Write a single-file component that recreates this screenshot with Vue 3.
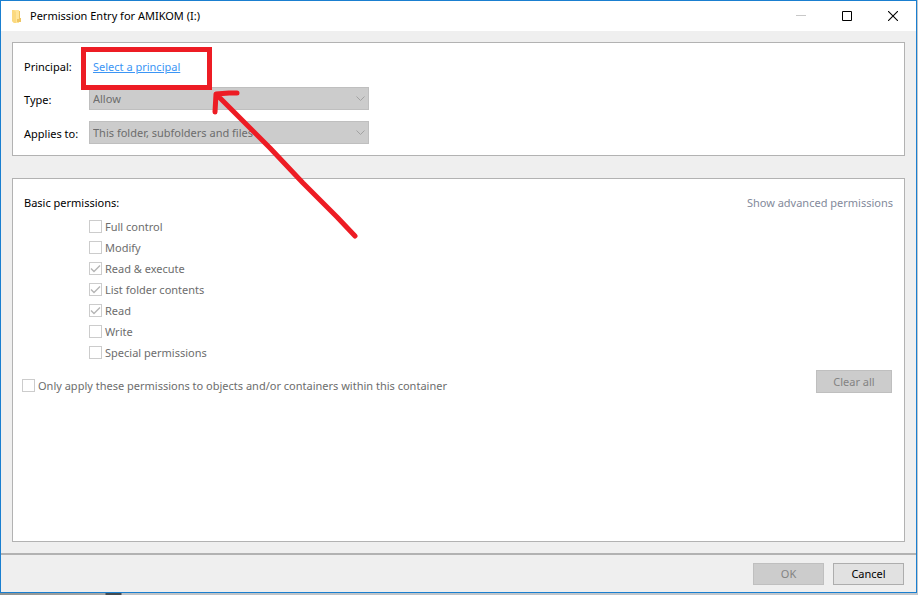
<script setup>
import { ref } from 'vue'

const permissions = ref([
  { id: 'full', label: 'Full control', checked: false },
  { id: 'modify', label: 'Modify', checked: false },
  { id: 'execute', label: 'Read & execute', checked: true },
  { id: 'list', label: 'List folder contents', checked: true },
  { id: 'read', label: 'Read', checked: true },
  { id: 'write', label: 'Write', checked: false },
  { id: 'special', label: 'Special permissions', checked: false },
])
const onlyApply = ref(false)
</script>

<template>
  <div class="desktop">
    <main class="window">
      <header class="titlebar">
        <svg class="folder" width="10" height="13" viewBox="0 0 10 13" aria-hidden="true">
          <path d="M0 0h7v13H2L0 11z" fill="#ffe59b" />
          <path d="M0 0h2l2 2v11H2L0 11z" fill="#fbd980" />
          <path d="M7 1h1v7h1v4H5V9h2z" fill="#eec665" />
        </svg>
        <h1 class="title">Permission Entry for AMIKOM (I:)</h1>
        <div class="caption">
          <button class="cap" type="button" aria-label="Minimize" disabled>
            <svg width="10" height="10" viewBox="0 0 10 10"><path d="M0 4.5h10" stroke="#c8c8c8" fill="none" /></svg>
          </button>
          <button class="cap" type="button" aria-label="Maximize">
            <svg width="10" height="10" viewBox="0 0 10 10"><path d="M.5.5h9v9h-9z" stroke="#000" fill="none" /></svg>
          </button>
          <button class="cap" type="button" aria-label="Close">
            <svg width="10" height="10" viewBox="0 0 10 10"><path d="M0 0l10 10M10 0L0 10" stroke="#000" stroke-width="1.1" fill="none" /></svg>
          </button>
        </div>
      </header>

      <div class="content">
        <section class="panel entry">
          <span class="name">Principal:</span>
          <a class="principal" href="#">Select a principal</a>
          <label class="name" for="type">Type:</label>
          <div class="combo">
            <select id="type" disabled><option>Allow</option></select>
            <svg class="chevron" width="9" height="6" viewBox="0 0 9 6" aria-hidden="true"><path d="M.5.5l4 4 4-4" /></svg>
          </div>
          <label class="name" for="applies">Applies to:</label>
          <div class="combo">
            <select id="applies" disabled><option>This folder, subfolders and files</option></select>
            <svg class="chevron" width="9" height="6" viewBox="0 0 9 6" aria-hidden="true"><path d="M.5.5l4 4 4-4" /></svg>
          </div>
        </section>

        <section class="panel basic">
          <div class="heading">
            <h2>Basic permissions:</h2>
            <a class="advanced" href="#">Show advanced permissions</a>
          </div>
          <ul class="list">
            <li v-for="p in permissions" :key="p.id">
              <label class="check">
                <span class="box">
                  <input v-model="p.checked" type="checkbox" disabled />
                  <svg v-if="p.checked" class="tick" width="13" height="13" viewBox="0 0 13 13" aria-hidden="true"><path d="M2 6.5l3 3 6-6" /></svg>
                </span>
                {{ p.label }}
              </label>
            </li>
          </ul>
          <div class="scope">
            <label class="check">
              <span class="box"><input v-model="onlyApply" type="checkbox" disabled /></span>
              Only apply these permissions to objects and/or containers within this container
            </label>
            <button class="btn clear" type="button" disabled>Clear all</button>
          </div>
        </section>
      </div>

      <footer class="footer">
        <button class="btn" type="button" disabled>OK</button>
        <button class="btn" type="button">Cancel</button>
      </footer>
    </main>

    <svg class="markup" width="360" height="244" viewBox="0 0 360 244" aria-hidden="true">
      <rect x="83.5" y="49.5" width="126" height="38" />
      <path d="M355 236L337 217L303 183L270 148L254 132L236 114L217 95M237 93L229 93L216 94L215 112" />
    </svg>
  </div>
</template>

<style>
body {
  margin: 0;
}
</style>

<style scoped>
.desktop {
  position: relative;
  box-sizing: border-box;
  display: flex;
  min-height: 100vh;
  padding: 0 1px 2px 0;
  background: linear-gradient(to right, #8f9391 0, #a5a8a8 105px, #444b50 106px, #444b50 121px, #bfc3c6 122px, #c2c8ce 100%);
  font-family: "Noto Sans", "Open Sans", sans-serif;
  font-size: 11px;
  line-height: 16px;
  color: #000;
}
.window {
  flex: 1;
  display: flex;
  flex-direction: column;
  border: 1px solid #1a7fd0;
  background: #efefef;
}
.titlebar {
  display: flex;
  align-items: center;
  height: 30px;
  padding-left: 11px;
  background: #fff;
}
.title {
  flex: 1;
  margin: 0 0 0 8px;
  font-size: 11px;
  font-weight: 400;
}
.caption {
  display: flex;
}
.cap {
  display: flex;
  align-items: center;
  justify-content: center;
  width: 46px;
  height: 28px;
  padding: 0;
  border: 0;
  background: none;
}
.content {
  flex: 1;
  display: flex;
  flex-direction: column;
  gap: 22px;
  padding: 11px;
}
.panel {
  border: 1px solid #b2b2b2;
  background: #fff;
}
.entry {
  display: grid;
  grid-template-columns: 61px minmax(0, 280px);
  column-gap: 4px;
  row-gap: 11px;
  align-items: center;
  padding: 13px 11px 11px;
}
.name {
  padding-top: 2px;
  white-space: nowrap;
}
.principal {
  justify-self: start;
  margin: 3px 4px 1px;
  color: #3b95f5;
}
.combo {
  position: relative;
}
.combo select {
  appearance: none;
  display: block;
  box-sizing: border-box;
  width: 100%;
  height: 23px;
  padding: 0 3px;
  border: 1px solid #bfbfbf;
  border-radius: 0;
  background: #ccc;
  font: inherit;
  color: #6d6d6d;
  opacity: 1;
}
.chevron {
  position: absolute;
  right: 4px;
  top: 9px;
  fill: none;
  stroke: #a2a2a2;
}
.basic {
  flex: 1;
  padding: 16px 11px;
}
.heading {
  display: flex;
  justify-content: space-between;
}
.heading h2 {
  margin: 0;
  font-size: 11px;
  font-weight: 400;
}
.advanced {
  color: #838a9b;
  text-decoration: none;
}
.list {
  margin: 5px 0 0 65px;
  padding: 0;
  list-style: none;
}
.check {
  display: flex;
  align-items: center;
  gap: 3px;
  height: 21px;
  color: #6d6d6d;
}
.box {
  position: relative;
  width: 13px;
  height: 13px;
}
.box input {
  appearance: none;
  display: block;
  box-sizing: border-box;
  width: 13px;
  height: 13px;
  margin: 0;
  border: 1px solid #ccc;
  background: #fff;
}
.tick {
  position: absolute;
  left: 0;
  top: 0;
  fill: none;
  stroke: #b5b5b5;
  stroke-width: 1.4;
}
.scope {
  display: flex;
  justify-content: space-between;
  align-items: flex-start;
  margin: 7px 1px 0 -2px;
}
.scope .check {
  margin-top: 5px;
}
.btn {
  box-sizing: border-box;
  width: 71px;
  height: 22px;
  padding: 0;
  border: 1px solid #adadad;
  background: #e1e1e1;
  font: inherit;
  color: #000;
}
.btn:disabled {
  border-color: #bfbfbf;
  background: #ccc;
  color: #838383;
}
.clear {
  width: 76px;
  height: 23px;
}
.footer {
  display: flex;
  justify-content: flex-end;
  gap: 9px;
  padding: 8px 12px 7px;
  border-top: 2px solid #b2b2b2;
}
.markup {
  position: absolute;
  left: 0;
  top: 0;
  fill: none;
  stroke: #ed1c24;
  stroke-width: 5;
  pointer-events: none;
}
.markup path {
  stroke-linecap: round;
  stroke-linejoin: round;
}
</style>
